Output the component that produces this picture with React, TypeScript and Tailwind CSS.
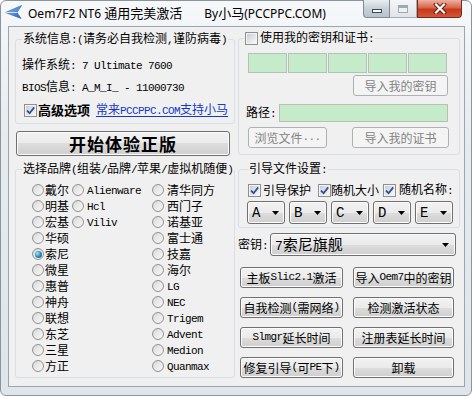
import React from 'react';

const mono = "font-['Liberation_Mono'] text-[11px] tracking-[-0.6px]";

// mixed CJK / ascii text: ascii runs get the narrow mono face (SimSun-ish half width)
const T = ({ s, m = mono }: { s: string; m?: string }) => {
  const parts = s.split(/([\x20-\x7e]+)/).filter((p) => p !== '');
  return (
    <>
      {parts.map((p, i) =>
        /^[\x20-\x7e]+$/.test(p) ? (
          <span key={i} className={m}>
            {p}
          </span>
        ) : (
          <span key={i}>{p}</span>
        )
      )}
    </>
  );
};

const Check = ({ checked }: { checked?: boolean }) => (
  <span className="w-[13px] h-[13px] shrink-0 border border-[#8e8f8f] bg-[#f4f4f4] flex items-center justify-center">
    <span className="w-[9px] h-[9px] bg-[linear-gradient(135deg,#c9ced6,#f7f7f7)] flex items-center justify-center">
      {checked && (
        <svg width="9" height="9" viewBox="0 0 9 9">
          <path d="M1 4.6 L3.6 7.2 L8.2 1.4" fill="none" stroke="#2d4f9e" strokeWidth="1.8" />
        </svg>
      )}
    </span>
  </span>
);

const Radio = ({ label, checked, gap }: { label: string; checked?: boolean; gap: string }) => (
  <div className="flex items-center h-[16px] leading-[16px]">
    <span className="w-[12px] h-[12px] shrink-0 rounded-full border border-[#949494] bg-[linear-gradient(135deg,#d2d2d2,#fbfbfb)] flex items-center justify-center">
      {checked ? (
        <span className="w-[7px] h-[7px] rounded-full bg-[radial-gradient(circle_at_35%_35%,#9fe6f7,#1d86bb_55%,#0c3f68)]" />
      ) : (
        <span className="w-[8px] h-[8px] rounded-full bg-[linear-gradient(135deg,#dcdcdc,#f7f7f7)]" />
      )}
    </span>
    <span className={gap}>
      <T s={label} />
    </span>
  </div>
);

const btn =
  'h-[21px] rounded-[3px] border border-[#707070] bg-[linear-gradient(#f2f2f2_0%,#ebebeb_50%,#dddddd_50%,#cfcfcf_100%)] shadow-[inset_0_0_0_1px_#fcfcfc] flex items-center justify-center text-[12px] leading-none text-black';
const btnOff =
  'h-[21px] rounded-[3px] border border-[#adb2b5] bg-[#f4f4f4] flex items-center justify-center text-[12px] leading-none text-[#838383]';

const Arrow = () => (
  <svg width="7" height="4" viewBox="0 0 7 4">
    <path d="M0 0 H7 L3.5 4 Z" fill="#000" />
  </svg>
);

const Drop = ({ v }: { v: string }) => (
  <div className={btn + ' w-[38px] h-[23px] !justify-between pl-[4px] pr-[5px]'}>
    <span className="font-['Liberation_Mono'] text-[14px]">{v}</span>
    <Arrow />
  </div>
);

const col1 = ['戴尔', '明基', '宏基', '华硕', '索尼', '微星', '惠普', '神舟', '联想', '东芝', '三星', '方正'];
const col2 = ['Alienware', 'Hcl', 'Viliv'];
const col3 = ['清华同方', '西门子', '诺基亚', '富士通', '技嘉', '海尔', 'LG', 'NEC', 'Trigem', 'Advent', 'Medion', 'Quanmax'];

const actions = [
  '主板Slic2.1激活',
  '导入Oem7中的密钥',
  '自我检测(需网络)',
  '检测激活状态',
  'Slmgr延长时间',
  '注册表延长时间',
  '修复引导(可PE下)',
  '卸载',
];

export default function App() {
  return (
    <div className="w-[472px] h-[396px] overflow-hidden bg-white font-['Noto_Sans_CJK_SC',sans-serif] text-[12px] text-black">
      <div className="w-[472px] h-[396px] rounded-[6px] border border-[#8b959e] bg-[linear-gradient(#f6f8fa,#e6ebef_35%,#dfe5ea)] flex flex-col">
        {/* title bar */}
        <div className="h-[25px] flex items-start shrink-0">
          <svg className="ml-[4px] mt-[4px]" width="17" height="14" viewBox="0 0 17 14">
            <defs>
              <linearGradient id="ic" x1="0" y1="0" x2="1" y2="1">
                <stop offset="0" stopColor="#9cc9f2" />
                <stop offset="1" stopColor="#1f5fb8" />
              </linearGradient>
            </defs>
            <path d="M0.5 7.5 L16.5 0.5 L12 7.5 L16 13.5 Z" fill="url(#ic)" stroke="#2a5c9c" strokeWidth="0.6" />
            <path d="M12 7.5 L0.5 7.5" stroke="#e8f3ff" strokeWidth="0.8" />
          </svg>
          <div className="ml-[6px] mt-[3px] leading-[18px] text-[12px] font-['Noto_Sans','Noto_Sans_CJK_SC',sans-serif] whitespace-nowrap">
            Oem7F2 NT6 <span className="text-[13px]">通用完美激活</span>
          </div>
          <div className="ml-[22px] mt-[3px] leading-[18px] text-[12px] font-['Noto_Sans','Noto_Sans_CJK_SC',sans-serif] whitespace-nowrap">
            By<span className="text-[13px]">小马</span>(PCCPPC.COM)
          </div>
          <div className="ml-auto mr-[9px] flex h-[18px] -mt-[1px]">
            <div className="w-[27px] h-full rounded-bl-[4px] border border-[#7f8b96] border-t-0 bg-[linear-gradient(#e9edf1,#c8d0d8_50%,#b9c3cc)] flex items-end justify-center pb-[4px]">
              <span className="w-[10px] h-[4px] border border-[#3d4650] bg-white" />
            </div>
            <div className="w-[27px] h-full border-b border-r border-[#a3adb6] bg-[linear-gradient(#f4f6f8,#dfe4e9)] flex items-center justify-center">
              <span className="w-[10px] h-[8px] border border-[#a0a8b0] bg-[#eef1f4] shadow-[inset_0_2px_0_#a0a8b0]" />
            </div>
            <div className="w-[45px] h-full rounded-br-[4px] border border-[#7a2a1a] border-t-0 bg-[linear-gradient(#eeb0a2,#d9654a_45%,#c5391c_55%,#d4563a)] flex items-center justify-center">
              <svg width="14" height="11" viewBox="0 0 14 11">
                <path d="M3 1.5 L11 9.5 M11 1.5 L3 9.5" stroke="#5b1a0d" strokeWidth="4" strokeLinecap="square" />
                <path d="M3 1.5 L11 9.5 M11 1.5 L3 9.5" stroke="#fff" strokeWidth="2.2" strokeLinecap="square" />
              </svg>
            </div>
          </div>
        </div>

        {/* client area */}
        <div className="ml-[7px] w-[457px] h-[361px] border border-[#9aa5b0] bg-[#f0f0f0] flex">
          {/* left column */}
          <div className="ml-[6px] w-[220px] flex flex-col">
            <fieldset className="mt-[4px] h-[93px] min-w-0 border border-[#d5dfe5] rounded-[3px]">
              <legend className="ml-[6px] px-[1px] leading-[14px]">
                <T s="系统信息:(请务必自我检测,谨防病毒)" />
              </legend>
              <div className="mt-[9px] pl-[6px] h-[16px] leading-[16px] whitespace-nowrap">
                <T s="操作系统: 7 Ultimate 7600" />
              </div>
              <div className="mt-[6px] pl-[6px] h-[16px] leading-[16px] whitespace-nowrap">
                <T s="BIOS信息: A_M_I_ - 11000730" />
              </div>
              <div className="mt-[8px] pl-[8px] h-[16px] leading-[16px] flex items-center whitespace-nowrap">
                <Check checked />
                <span className="ml-[1px] text-[13px] font-bold">高级选项</span>
                <span className="ml-[6px] text-[#1438c8] underline underline-offset-[2px]">
                  <T s="常来PCCPPC.COM支持小马" />
                </span>
              </div>
            </fieldset>

            <div className={btn + ' mt-[7px] ml-[1px] w-[214px] !h-[25px] !text-[17px] font-bold tracking-[1px]'}>
              开始体验正版
            </div>

            <fieldset className="mt-[5px] h-[217px] min-w-0 border border-[#d5dfe5] rounded-[3px]">
              <legend className="ml-[6px] px-[1px] leading-[14px] whitespace-nowrap">
                <T s="选择品牌(组装/品牌/苹果/虚拟机随便)" />
              </legend>
              <div className="mt-[5px] pl-[16px] flex">
                <div className="w-[40px] flex flex-col">
                  {col1.map((b) => (
                    <Radio key={b} label={b} checked={b === '索尼'} gap="ml-[1px]" />
                  ))}
                </div>
                <div className="w-[80px] flex flex-col">
                  {col2.map((b) => (
                    <Radio key={b} label={b} gap="ml-[3px]" />
                  ))}
                </div>
                <div className="flex flex-col">
                  {col3.map((b) => (
                    <Radio key={b} label={b} gap="ml-[3px]" />
                  ))}
                </div>
              </div>
            </fieldset>
          </div>

          {/* right column */}
          <div className="ml-[3px] w-[222px] flex flex-col">
            <fieldset className="mt-[3px] h-[125px] min-w-0 border border-[#d5dfe5] rounded-[3px]">
              <legend className="ml-[5px] px-[1px] leading-[14px]">
                <span className="flex items-center">
                  <Check />
                  <span className="ml-[2px]">
                    <T s="使用我的密钥和证书:" />
                  </span>
                </span>
              </legend>
              <div className="mt-[7px] ml-[9px] flex gap-[1px]">
                {[0, 1, 2, 3, 4].map((i) => (
                  <div key={i} className="w-[39px] h-[20px] border border-[#b3c2b4] bg-[#c6ebca]" />
                ))}
              </div>
              <div className={btnOff + ' mt-[2px] ml-[114px] w-[95px]'}>导入我的密钥</div>
              <div className="mt-[8px] ml-[7px] flex items-center h-[18px]">
                <span className="w-[33px] leading-[16px]">
                  <T s="路径:" />
                </span>
                <div className="w-[169px] h-[18px] border border-[#b3c2b4] bg-[#c6ebca]" />
              </div>
              <div className="mt-[5px] ml-[9px] flex">
                <div className={btnOff + ' w-[79px]'}>
                  <T s="浏览文件..." />
                </div>
                <div className={btnOff + ' ml-[25px] w-[97px]'}>导入我的证书</div>
              </div>
            </fieldset>

            <fieldset className="mt-[6px] h-[67px] min-w-0 border border-[#d5dfe5] rounded-[3px]">
              <legend className="ml-[9px] px-[1px] leading-[14px]">
                <T s="引导文件设置:" />
              </legend>
              <div className="mt-[6px] pl-[9px] h-[14px] leading-[14px] flex items-center whitespace-nowrap">
                <Check checked />
                <span className="ml-[2px]">引导保护</span>
                <span className="ml-[7px]">
                  <Check checked />
                </span>
                <span className="ml-[0px]">随机大小</span>
                <span className="ml-[4px]">
                  <Check checked />
                </span>
                <span className="ml-[3px]">
                  <T s="随机名称:" />
                </span>
              </div>
              <div className="mt-[4px] ml-[8px] flex gap-[4px]">
                {['A', 'B', 'C', 'D', 'E'].map((v) => (
                  <Drop key={v} v={v} />
                ))}
              </div>
            </fieldset>

            <div className="mt-[5px] flex items-center h-[23px]">
              <span className="w-[32px] leading-[16px]">
                <T s="密钥:" />
              </span>
              <div className={btn + ' w-[186px] !h-[23px] !justify-between pl-[4px] pr-[6px]'}>
                <span className="text-[15px] leading-none">
                  <span className="font-['Liberation_Mono'] text-[13px]">7</span>索尼旗舰
                </span>
                <Arrow />
              </div>
            </div>

            <div className="mt-[11px] ml-[2px] grid grid-cols-[103px_101px] gap-x-[10px] gap-y-[9px]">
              {actions.map((a) => (
                <div key={a} className={btn + ' whitespace-nowrap'}>
                  <T s={a} />
                </div>
              ))}
            </div>
          </div>
        </div>
      </div>
    </div>
  );
}
